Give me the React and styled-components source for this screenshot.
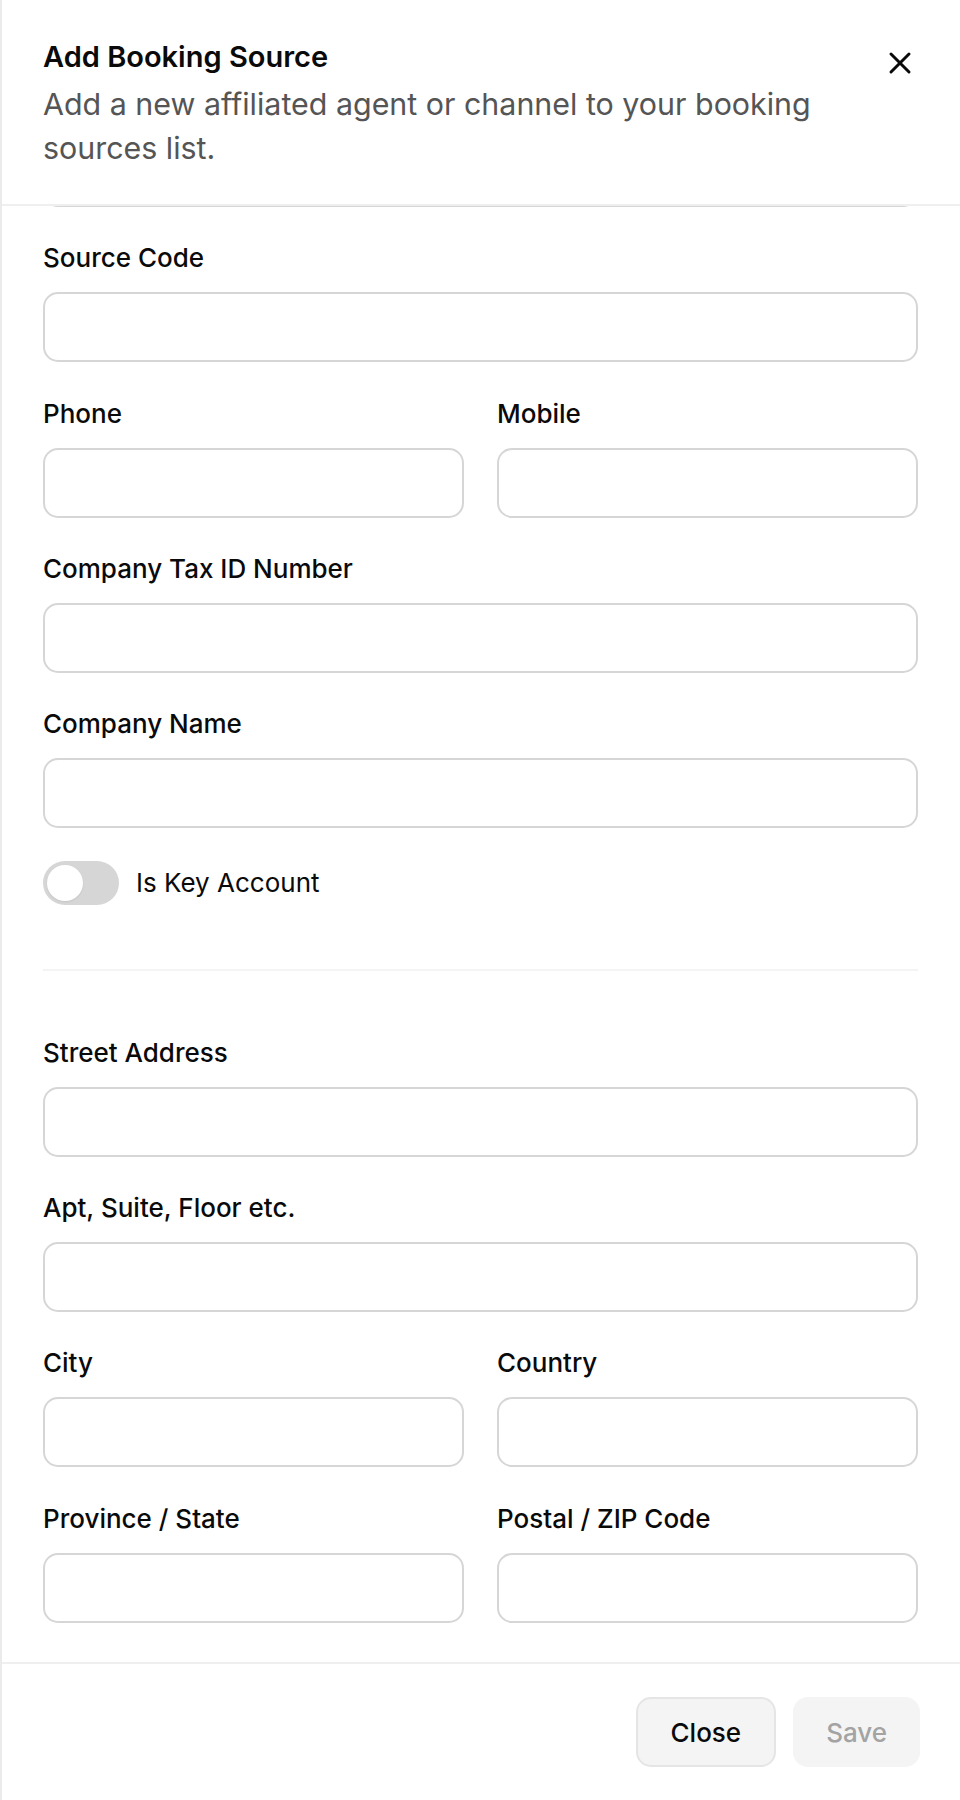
import React, { useLayoutEffect, useRef, useState } from 'react';
import styled, { createGlobalStyle } from 'styled-components';
import { X } from 'lucide-react';

const GlobalStyle = createGlobalStyle`
    * { box-sizing: border-box; }
    body {
        margin: 0;
        background: #ffffff;
        font-family: Inter, "Noto Sans", "Liberation Sans", sans-serif;
        color: #0a0a0a;
    }
`

const Sheet = styled.div`
    height: 100vh;
    display: flex;
    flex-direction: column;
    background: #ffffff;
    border-left: 2px solid #ebebeb;
`

const Header = styled.header`
    position: relative;
    display: flex;
    flex-direction: column;
    gap: 7px;
    padding: 39px 110px 34px 41px;
    border-bottom: 2px solid #efefef;
`

const Title = styled.h2`
    margin: 0;
    font-size: 29px;
    line-height: 36px;
    font-weight: 600;
`

const Description = styled.p`
    margin: 0;
    font-size: 30.4px;
    line-height: 44px;
    font-weight: 400;
    color: #555555;
`

const CloseIcon = styled.button`
    position: absolute;
    top: 45px;
    right: 42px;
    width: 36px;
    height: 36px;
    padding: 0;
    border: none;
    background: transparent;
    color: #0a0a0a;
    display: flex;
    align-items: center;
    justify-content: center;
    cursor: pointer;
`

const Body = styled.div`
    flex: 1;
    overflow-y: auto;
    padding: 0 42px 39px 41px;
    scrollbar-width: none;
    &::-webkit-scrollbar { display: none; }
`

const Form = styled.form`
    display: flex;
    flex-direction: column;
    gap: 33.33px;
    padding-top: 34px;
`

const Field = styled.div`
    display: flex;
    flex-direction: column;
    gap: 16px;
    min-width: 0;
`

const Label = styled.label`
    font-size: 26px;
    line-height: 36px;
    font-weight: 500;
    color: #0a0a0a;
`

const Input = styled.input`
    height: 70px;
    width: 100%;
    padding: 0 22px;
    border: 2px solid #d6d6d6;
    border-radius: 15px;
    background: #ffffff;
    font-family: inherit;
    font-size: 26px;
    color: #0a0a0a;
    outline: none;
`

const Row = styled.div`
    display: grid;
    grid-template-columns: 1fr 1fr;
    gap: 33px;
`

const ToggleRow = styled.div`
    display: flex;
    align-items: center;
    gap: 17px;
    margin-top: -1px;
`

const Track = styled.button`
    width: 76px;
    height: 44px;
    padding: 4px;
    border: none;
    border-radius: 22px;
    background: ${p => (p.$on ? '#171717' : '#d6d6d6')};
    display: flex;
    justify-content: ${p => (p.$on ? 'flex-end' : 'flex-start')};
    cursor: pointer;
`

const Thumb = styled.span`
    width: 36px;
    height: 36px;
    border-radius: 50%;
    background: #ffffff;
    box-shadow: 0 1px 2px rgba(0,0,0,0.08);
`

const ToggleLabel = styled.span`
    font-size: 26px;
    line-height: 36px;
    font-weight: 400;
`

const Divider = styled.hr`
    margin: 31px 0 30.4px;
    border: none;
    height: 2px;
    background: #f4f4f4;
`

const Footer = styled.footer`
    display: flex;
    justify-content: flex-end;
    gap: 17px;
    padding: 33px 40px 33px 41px;
    border-top: 2px solid #efefef;
`

const Button = styled.button`
    height: 70px;
    padding: 0 ${p => (p.$muted ? '31px' : '33px')};
    border-radius: 15px;
    border: 2px solid ${p => (p.$muted ? 'transparent' : '#e5e5e5')};
    background: #f4f4f4;
    color: ${p => (p.$muted ? '#a3a3a3' : '#0a0a0a')};
    font-family: inherit;
    font-size: 26px;
    font-weight: 500;
    cursor: ${p => (p.$muted ? 'default' : 'pointer')};
`

const TextField = ({ label, name }) => (
    <Field>
        <Label htmlFor={name}>{label}</Label>
        <Input id={name} name={name} type="text" />
    </Field>
);

const App = () => {
    const bodyRef = useRef(null);
    const [keyAccount, setKeyAccount] = useState(false);

    // the sheet is shown scrolled down to the address block
    useLayoutEffect(() => {
        if (bodyRef.current) {
            bodyRef.current.scrollTop = bodyRef.current.scrollHeight;
        }
    }, []);

    return (
        <>
            <GlobalStyle />
            <Sheet role="dialog">
                <Header>
                    <Title>Add Booking Source</Title>
                    <Description>Add a new affiliated agent or channel to your booking sources list.</Description>
                    <CloseIcon type="button" aria-label="Close">
                        <X size={36} strokeWidth={2} />
                    </CloseIcon>
                </Header>

                <Body ref={bodyRef}>
                    <Form onSubmit={e => e.preventDefault()}>
                        <TextField label="Source Name" name="sourceName" />
                        <TextField label="Source Code" name="sourceCode" />
                        <Row>
                            <TextField label="Phone" name="phone" />
                            <TextField label="Mobile" name="mobile" />
                        </Row>
                        <TextField label="Company Tax ID Number" name="taxId" />
                        <TextField label="Company Name" name="companyName" />
                        <ToggleRow>
                            <Track type="button" role="switch" aria-checked={keyAccount} $on={keyAccount} onClick={() => setKeyAccount(!keyAccount)}>
                                <Thumb />
                            </Track>
                            <ToggleLabel>Is Key Account</ToggleLabel>
                        </ToggleRow>

                        <Divider />

                        <TextField label="Street Address" name="street" />
                        <TextField label="Apt, Suite, Floor etc." name="apt" />
                        <Row>
                            <TextField label="City" name="city" />
                            <TextField label="Country" name="country" />
                        </Row>
                        <Row>
                            <TextField label="Province / State" name="province" />
                            <TextField label="Postal / ZIP Code" name="postal" />
                        </Row>
                    </Form>
                </Body>

                <Footer>
                    <Button type="button">Close</Button>
                    <Button type="button" $muted disabled>Save</Button>
                </Footer>
            </Sheet>
        </>
    );
}

export default App;
